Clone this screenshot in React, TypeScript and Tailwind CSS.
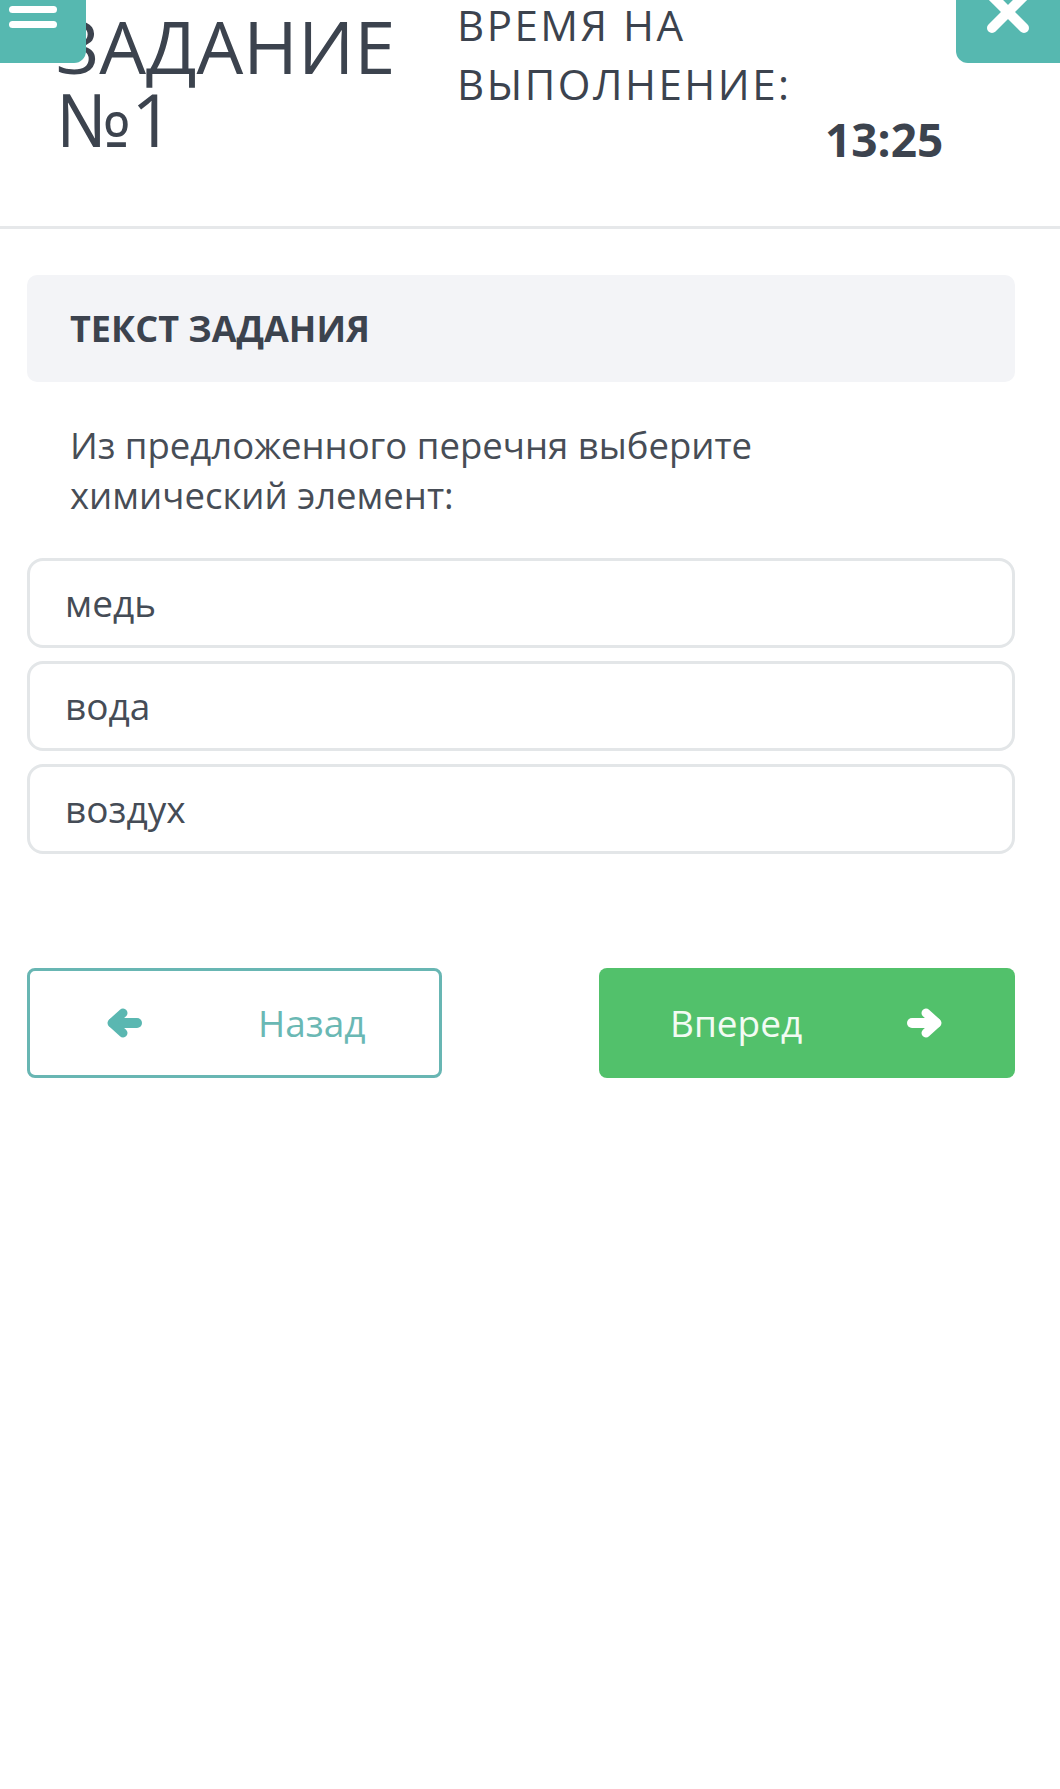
import React from "react";

const font = { fontFamily: '"Open Sans", "Noto Sans", sans-serif' };

function ArrowLeft({ color }: { color: string }) {
  return (
    <svg width="36" height="30" viewBox="0 0 36 30" fill="none">
      <path d="M7 15H31" stroke={color} strokeWidth="10" strokeLinecap="round" />
      <path d="M17 5L6 15L17 25" stroke={color} strokeWidth="9" strokeLinecap="round" strokeLinejoin="round" />
    </svg>
  );
}

function ArrowRight({ color }: { color: string }) {
  return (
    <svg width="36" height="30" viewBox="0 0 36 30" fill="none">
      <path d="M5 15H29" stroke={color} strokeWidth="10" strokeLinecap="round" />
      <path d="M19 5L30 15L19 25" stroke={color} strokeWidth="9" strokeLinecap="round" strokeLinejoin="round" />
    </svg>
  );
}

export default function App() {
  const options = ["медь", "вода", "воздух"];
  return (
    <div className="relative min-h-[1789px] w-[1060px] bg-white text-[#3c434e]" style={font}>
      {/* header */}
      <div className="flex h-[226px]">
        <div className="ml-[56px] w-[401px] pt-[9px] text-[74px] leading-[73px] font-normal">
          <div>ЗАДАНИЕ</div>
          <div>№1</div>
        </div>
        <div className="flex flex-col">
          <div className="mt-[-5px] text-[42px] leading-[59px] tracking-[2.5px]">
            <div>ВРЕМЯ НА</div>
            <div>ВЫПОЛНЕНИЕ:</div>
          </div>
          <div className="ml-[368px] mt-[3px] text-[46px] font-bold leading-[46px]">13:25</div>
        </div>
      </div>
      <div className="h-[3px] bg-[#e6e8ea]" />

      {/* menu button */}
      <div className="absolute left-0 top-0 flex h-[63px] w-[86px] flex-col gap-[8px] rounded-br-[12px] bg-[#56b8b0] pl-[9px] pt-[6px]">
        <div className="h-[7px] w-[48px] rounded-full bg-white" />
        <div className="h-[7px] w-[48px] rounded-full bg-white" />
      </div>
      {/* close button */}
      <div className="absolute right-0 top-0 h-[63px] w-[104px] overflow-hidden rounded-bl-[12px] bg-[#56b8b0]">
        <svg className="absolute left-[30px] top-[-10px]" width="44" height="44" viewBox="0 0 44 44">
          <path d="M6 6L38 38M38 6L6 38" stroke="white" strokeWidth="10" strokeLinecap="round" />
        </svg>
      </div>

      {/* content */}
      <div className="pl-[27px] pr-[45px]">
        <div className="mt-[46px] flex h-[107px] items-center rounded-[10px] bg-[#f3f4f7] pl-[43px]">
          <span className="text-[36px] font-bold">ТЕКСТ ЗАДАНИЯ</span>
        </div>
        <div className="mt-[38px] pl-[43px] text-[36.5px] leading-[50px] text-[#474d56]">
          Из предложенного перечня выберите
          <br />
          химический элемент:
        </div>
        <div className="mt-[38px] flex flex-col gap-[13px]">
          {options.map((o) => (
            <div
              key={o}
              className="flex h-[90px] items-center rounded-[16px] border-[3px] border-[#e3e6e8] pl-[35px] text-[37px] text-[#454c56]"
            >
              {o}
            </div>
          ))}
        </div>
        <div className="mt-[114px] flex justify-between">
          <div className="flex h-[110px] w-[415px] items-center rounded-[8px] border-[3px] border-[#68b6b3] pl-[76px]">
            <ArrowLeft color="#5ab7b1" />
            <span className="ml-[116px] text-[37px] text-[#6ab8b4]">Назад</span>
          </div>
          <div className="flex h-[110px] w-[416px] items-center rounded-[8px] bg-[#52c16b] pl-[71px]">
            <span className="text-[37px] text-[#f2fbf3]">Вперед</span>
            <span className="ml-[105px]">
              <ArrowRight color="#ffffff" />
            </span>
          </div>
        </div>
      </div>
    </div>
  );
}
